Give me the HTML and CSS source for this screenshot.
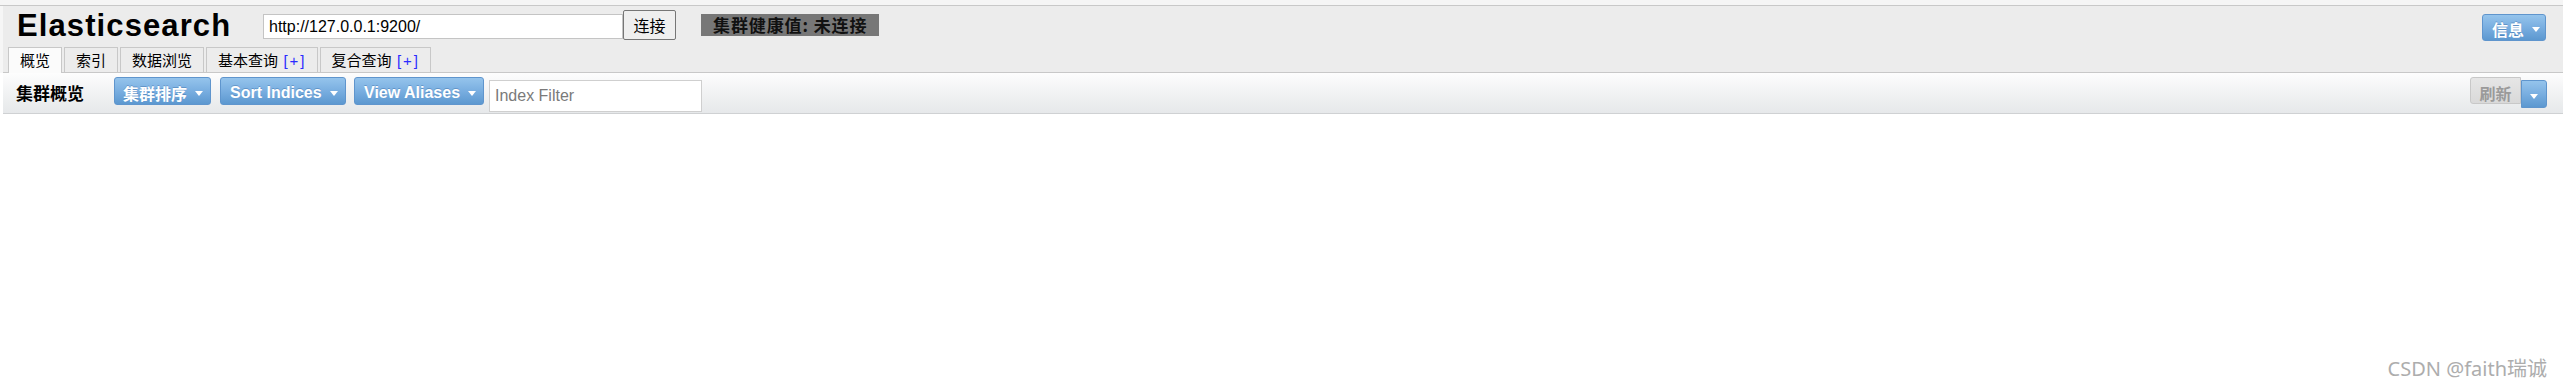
FILE: index.html
```html
<!DOCTYPE html>
<html lang="zh-CN">
<head>
<meta charset="utf-8">
<title>Elasticsearch Head</title>
<link rel="stylesheet" href="styles.css">
</head>
<body>
<div class="topstrip"></div>
<div class="shell">
  <div class="header">
    <div class="row1">
      <h1 class="title">Elasticsearch</h1>
      <input class="url" type="text" value="http://127.0.0.1:9200/">
      <button class="connect">连接</button>
      <span class="health">集群健康值: 未连接</span>
      <button class="btn-blue info">信息<span class="caret"></span></button>
    </div>
    <div class="tabs">
      <div class="tab active">概览</div>
      <div class="tab">索引</div>
      <div class="tab">数据浏览</div>
      <div class="tab">基本查询 <span class="plus">[+]</span></div>
      <div class="tab">复合查询 <span class="plus">[+]</span></div>
    </div>
  </div>
</div>
<div class="toolbar">
  <span class="tb-title">集群概览</span>
  <button class="btn-blue sort-cluster">集群排序<span class="caret"></span></button>
  <button class="btn-blue sort-indices">Sort Indices<span class="caret"></span></button>
  <button class="btn-blue view-aliases">View Aliases<span class="caret"></span></button>
  <input class="filter" type="text" placeholder="Index Filter">
  <div class="tb-right">
    <button class="refresh">刷新</button>
    <button class="btn-blue refresh-menu"><span class="caret"></span></button>
  </div>
</div>
<div class="watermark">CSDN @faith瑞诚</div>
</body>
</html>
```

FILE: styles.css
```css
* { box-sizing: border-box; }

html, body {
  margin: 0;
  padding: 0;
  background: #ffffff;
  font-family: "Liberation Sans", Arial, "Noto Sans CJK SC", sans-serif;
}

body { position: relative; width: 2563px; height: 387px; overflow: hidden; }

.topstrip {
  height: 6px;
  background: #f5f5f5;
  border-bottom: 1px solid #c8c8c8;
}

.shell {
  background: #f6f6f6;
  padding-left: 3px;
}

.header {
  background: #ececec;
  border-bottom: 1px solid #c8c8c8;
}

.row1 {
  height: 41px;
  display: flex;
  align-items: center;
  padding-left: 14px;
  padding-right: 17px;
}

.title {
  margin: 0;
  flex: 0 0 246px;
  font-size: 31px;
  font-weight: bold;
  letter-spacing: 1.1px;
  color: #000;
  line-height: 36px;
  margin-top: -2px;
}

.url {
  width: 360px;
  height: 25px;
  border: 1px solid #c4c4c4;
  padding: 0 5px;
  font-family: "Liberation Sans", Arial, sans-serif;
  font-size: 16px;
  color: #000;
  background: #fff;
  outline: none;
}

.connect {
  width: 53px;
  height: 30px;
  margin-top: -3px;
  border: 1px solid #767676;
  border-radius: 2px;
  background: #efefef;
  font-family: "Noto Sans CJK SC", sans-serif;
  font-size: 16px;
  color: #000;
  padding: 0;
}

.health {
  margin-left: 25px;
  margin-top: -3px;
  width: 178px;
  height: 22px;
  line-height: 22px;
  padding: 0 0 0 12px;
  background: #777777;
  color: #111;
  font-family: "Noto Sans CJK SC", sans-serif;
  font-weight: bold;
  font-size: 17px;
  letter-spacing: 0.9px;
  white-space: nowrap;
}

.btn-blue {
  display: inline-flex;
  align-items: center;
  height: 28px;
  padding: 4px 6px 0 8px;
  border: 1px solid #5f95cd;
  border-radius: 3px;
  background: linear-gradient(to bottom, #95c4ec 0%, #79aee0 50%, #5c98d0 100%);
  color: #fff;
  font-family: "Liberation Sans", Arial, "Noto Sans CJK SC", sans-serif;
  font-weight: bold;
  font-size: 16px;
  text-shadow: 0 -1px 0 rgba(40, 90, 150, 0.35);
  white-space: nowrap;
  cursor: pointer;
}

.caret {
  display: inline-block;
  width: 0;
  height: 0;
  margin-left: 8px;
  border-left: 4px solid transparent;
  border-right: 4px solid transparent;
  border-top: 5px solid #ffffff;
  margin-top: 1px;
}

.info {
  margin-left: auto;
  width: 64px;
  height: 27px;
  margin-top: 1px;
  padding-left: 9px;
  padding-top: 3px;
}

.tabs {
  display: flex;
  gap: 2px;
  padding-left: 5px;
  height: 25px;
}

.tab {
  height: 25px;
  line-height: 24px;
  padding: 0 11px;
  border: 1px solid #c8c8c8;
  border-bottom: none;
  background: #ececec;
  font-family: "Noto Sans CJK SC", sans-serif;
  font-size: 15px;
  color: #000;
  white-space: nowrap;
}

.tab.active {
  background: #fbfbfb;
  height: 26px;
  margin-bottom: -1px;
  position: relative;
}

.plus {
  color: #2b2bff;
  font-family: "Liberation Sans", Arial, sans-serif;
  letter-spacing: 2px;
  margin-left: 2px;
  margin-right: -1px;
}

.toolbar {
  display: flex;
  align-items: flex-start;
  height: 41px;
  padding-left: 13px;
  padding-right: 16px;
  background: linear-gradient(to bottom, #fdfdfd 0%, #f1f2f3 50%, #e6e8ea 100%);
  border-bottom: 1px solid #cfd1d3;
  margin-left: 3px;
}

.tb-title {
  margin-top: 10px;
  font-family: "Noto Sans CJK SC", sans-serif;
  font-weight: bold;
  font-size: 17px;
  line-height: 20px;
  color: #000;
  width: 98px;
}

.sort-cluster { margin-top: 4px; width: 97px; }
.sort-indices { margin-top: 4px; margin-left: 9px; width: 126px; padding-left: 9px; }
.view-aliases { margin-top: 4px; margin-left: 8px; width: 130px; padding-left: 9px; }

.filter {
  margin-top: 7px;
  margin-left: 5px;
  width: 213px;
  height: 32px;
  border: 1px solid #cfcfcf;
  padding: 0 5px;
  font-family: "Liberation Sans", Arial, sans-serif;
  font-size: 16px;
  background: #fff;
  outline: none;
}

.filter::placeholder { color: #7a7a7a; }

.tb-right {
  margin-left: auto;
  display: flex;
  align-items: flex-start;
}

.refresh {
  margin-top: 4px;
  width: 51px;
  height: 27px;
  border: 1px solid #c8c8c8;
  border-radius: 3px 0 0 3px;
  background: linear-gradient(to bottom, #e6e6e6, #d9d9d9);
  color: #9a9a9a;
  font-family: "Noto Sans CJK SC", sans-serif;
  font-weight: bold;
  font-size: 16px;
  padding: 3px 0 0 0;
}

.refresh-menu {
  margin-top: 7px;
  width: 26px;
  height: 28px;
  border-radius: 0 3px 3px 0;
  padding: 3px 0 0 0;
  justify-content: center;
}

.refresh-menu .caret { margin-left: 0; }

.watermark {
  position: absolute;
  right: 16px;
  top: 353px;
  font-family: "Noto Sans", "Noto Sans CJK SC", sans-serif;
  font-size: 20px;
  color: #adadad;
  white-space: nowrap;
}
```
